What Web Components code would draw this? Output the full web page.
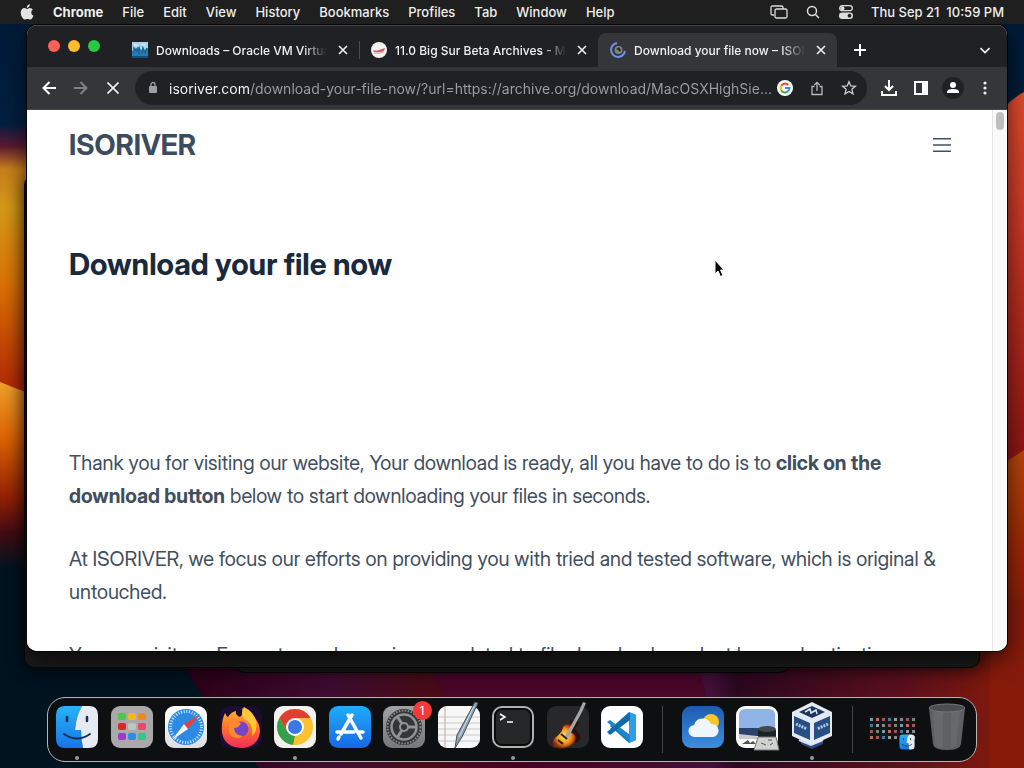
<!DOCTYPE html>
<html lang="en">
<head>
<meta charset="utf-8">
<title>Download your file now – ISORIVER</title>
<style>
  html, body { height: 100%; }
  body { margin: 0; overflow: hidden; background: #001420; font-family: Inter, "Liberation Sans", sans-serif; }
</style>
</head>
<body>
<mac-desktop>
  <menu-bar slot="menu"></menu-bar>
  <chrome-window slot="window">
    <browser-tab slot="tabs" label="Downloads – Oracle VM VirtualBox">
      <svg slot="icon" width="16" height="16" viewBox="0 0 16 16"><rect width="16" height="16" fill="#2a7db4"/><path d="M0 0h16v6L11 9 6 5 0 9z" fill="#a9d6ee"/><path d="M2 12V6l3 3 2-3v7M10 12l1-6 2 5 2-5" fill="none" stroke="#1b6498" stroke-width="1.500"/><path d="M2 3h4M10 3h3" stroke="#e6f6ff"/><path d="M0 14h16v2H0z" fill="#12507f"/></svg>
    </browser-tab>
    <browser-tab slot="tabs" label="11.0 Big Sur Beta Archives - Mr. Macintosh">
      <svg slot="icon" width="16" height="16" viewBox="0 0 16 16"><circle cx="8" cy="8" r="8" fill="#f5f1ef"/><path d="M2 8q3 1 6 0t6-2l-1 3q-4 2-10 1z" fill="#cf6068"/><path d="M3 11q5 1 10-1" fill="none" stroke="#b9b1ad"/></svg>
    </browser-tab>
    <browser-tab slot="tabs" active label="Download your file now – ISORIVER">
      <svg slot="icon" width="16" height="16" viewBox="0 0 16 16"><circle cx="8.500" cy="8" r="4" fill="#7d8681"/><path d="M6 7l3-2 2 3-1 2-2-2z" fill="#262c2c"/><path d="M7 1a7 7 0 1 0 8 8" fill="none" stroke="#6d92ec" stroke-width="2"/></svg>
    </browser-tab>
    <iso-page></iso-page>
  </chrome-window>
  <mac-dock slot="dock"></mac-dock>
</mac-desktop>

<script>
class MacDesktop extends HTMLElement {
  constructor() {
    super();
    this.attachShadow({ mode: "open" });
    this.shadowRoot.innerHTML = `
      <style>
        :host { display: block; position: relative; height: 100vh; overflow: hidden; }
        .wall { position: absolute; inset: 0; width: 100%; height: 100%; }
        .back {
          position: absolute;
          box-sizing: border-box;
          background: #1b1b1b;
          border: 1px solid #050505;
          border-radius: 10px;
        }
        .one { inset: 175px 44px 100px 24px; box-shadow: 0 4px 16px #0008; }
        .two { inset: 300px 234px 95px 235px; }
        .win { position: absolute; inset: 25px 17px 117px 27px; display: flex; }
        .menu { position: relative; }
        .dock { position: absolute; inset: auto 0 6px 0; display: flex; justify-content: center; }
        .cursor { position: absolute; left: 713px; top: 259px; }
      </style>
      <svg class="wall" viewBox="0 0 1024 768" preserveAspectRatio="none" aria-hidden="true">
        <defs>
          <linearGradient id="l" x1="0" y1="0" x2="0" y2="1">
            <stop offset="0" stop-color="#001a36"/><stop offset=".16" stop-color="#001f40"/>
            <stop offset=".19" stop-color="#5b1830"/><stop offset=".22" stop-color="#c8801c"/>
            <stop offset=".27" stop-color="#d59a18"/><stop offset=".37" stop-color="#da7206"/>
            <stop offset=".5" stop-color="#b52c06"/>
          </linearGradient>
          <linearGradient id="m" x1="0" y1="0" x2="0" y2="1">
            <stop offset="0" stop-color="#f0a22c"/><stop offset=".3" stop-color="#dc6404"/>
            <stop offset=".62" stop-color="#922006"/><stop offset=".8" stop-color="#430c14"/>
            <stop offset="1" stop-color="#001420"/>
          </linearGradient>
          <linearGradient id="r" x1="0" y1="0" x2="0" y2="1">
            <stop offset="0" stop-color="#e04c2c"/><stop offset=".35" stop-color="#cc3826"/>
            <stop offset="1" stop-color="#8c1414"/>
          </linearGradient>
          <linearGradient id="s" x1="0" y1="0" x2="0" y2="1">
            <stop offset="0" stop-color="#b8480a"/><stop offset=".5" stop-color="#9c2606"/>
            <stop offset="1" stop-color="#76180e"/>
          </linearGradient>
          <linearGradient id="b">
            <stop offset="0" stop-color="#2c0018"/><stop offset=".18" stop-color="#3e0c30"/>
            <stop offset=".29" stop-color="#480c18"/><stop offset=".4" stop-color="#480020"/>
            <stop offset=".63" stop-color="#421038"/><stop offset=".66" stop-color="#2c0820"/>
            <stop offset=".86" stop-color="#5c101c"/><stop offset="1" stop-color="#8a1c08"/>
          </linearGradient>
        </defs>
        <rect width="1024" height="768" fill="#001420"/>
        <rect width="512" height="768" fill="url(#l)"/>
        <path d="M0 382L40 398V570H0z" fill="url(#m)"/>
        <path d="M0 568h40v60h472v140H0z" fill="#001420"/>
        <rect x="512" width="512" height="110" fill="#001b38"/>
        <path d="M180 600H1024V768H260Q215 720 180 660z" fill="url(#b)"/>
        <path d="M420 660q20 22 26 38h260q-2-20-14-38z" fill="#480728"/>
        <path d="M990 130q14-28 34-38v370h-34z" fill="url(#r)"/>
        <path d="M990 472l34-22v200h-34z" fill="url(#s)"/>
        <path d="M990 600h34v168h-34z" fill="#861b0a"/>
      </svg>
      <div class="back two"></div>
      <div class="back one"></div>
      <div class="win"><slot name="window"></slot></div>
      <div class="menu"><slot name="menu"></slot></div>
      <div class="dock"><slot name="dock"></slot></div>
      <svg class="cursor" width="14" height="20" viewBox="0 0 14 20" aria-hidden="true"><path d="M2 1v14l3-3 2.500 5.500 2.500-1-2.500-5.500H11z" fill="#000" stroke="#fff"/></svg>
    `;
  }
}

class MenuBar extends HTMLElement {
  constructor() {
    super();
    this.attachShadow({ mode: "open" });
    const menus = ["File", "Edit", "View", "History", "Bookmarks", "Profiles", "Tab", "Window", "Help"];
    this.shadowRoot.innerHTML = `
      <style>
        :host {
          display: flex;
          align-items: center;
          box-sizing: border-box;
          height: 24px;
          padding: 0 20px;
          background: #1f1f1f;
          color: #eee;
          font-size: 13px;
          font-weight: 500;
        }
        nav, .status { display: flex; align-items: center; }
        nav { gap: 19px; }
        .status { margin-left: auto; gap: 17px; }
        button {
          display: flex;
          padding: 0;
          border: 0;
          background: none;
          color: inherit;
          font: inherit;
          white-space: pre;
        }
        .app { font-weight: 700; }
      </style>
      <nav>
        <button aria-label="Apple"><svg width="14" height="16" viewBox="0 0 14 16" fill="#e4e4e4"><path d="M9.800 0q.2 2-1 3.100Q7.900 4 6.800 3.900 6.700 2.300 7.700 1.200 8.600.2 9.800 0zM7 4.900c.8 0 1.500-.8 2.900-.8q2 0 3 1.500-1.700 1-1.700 2.900 0 2.300 2.200 3.200-.5 1.500-1.500 2.800-.8 1-1.700 1c-1 0-1.400-.6-2.700-.6s-1.800.6-2.700.6q-1 0-2-1.300Q.7 11.600.7 8.800q0-2.200 1.200-3.500 1-1.200 2.500-1.200c1.200 0 1.900.8 2.600.8z"/></svg></button>
        <button class="app">Chrome</button>
        ${menus.map(m => `<button>${m}</button>`).join("")}
      </nav>
      <div class="status">
        <button aria-label="Stage Manager"><svg width="18" height="14" viewBox="0 0 18 14" fill="none" stroke="#ddd" stroke-width="1.300"><path d="M4 10H2.500Q1 10 1 8.500v-6Q1 1 2.500 1h9Q13 1 13 2.500V4"/><rect x="5" y="4" width="12" height="9" rx="1.500"/></svg></button>
        <button aria-label="Spotlight"><svg width="16" height="14" viewBox="0 0 16 14" fill="none" stroke="#ddd" stroke-width="1.500"><circle cx="7" cy="6" r="4.500"/><path d="M10.500 9.500L14 13"/></svg></button>
        <button aria-label="Control Center"><svg width="16" height="14" viewBox="0 0 16 14"><rect x="1.700" y=".7" width="12.600" height="5" rx="2.500" fill="none" stroke="#ddd" stroke-width="1.300"/><circle cx="4.500" cy="3.200" r="2" fill="#ddd"/><rect x="1" y="7.500" width="14" height="6.500" rx="3.200" fill="#ddd"/><circle cx="11.500" cy="10.700" r="1.900" fill="#1f1f1f"/></svg></button>
        <button>Thu Sep 21  10:59 PM</button>
      </div>
    `;
  }
}

class BrowserTab extends HTMLElement {
  constructor() {
    super();
    this.attachShadow({ mode: "open" });
    this.shadowRoot.innerHTML = `
      <style>
        :host {
          display: flex;
          flex: 0 1 239px;
          min-width: 0;
          align-items: center;
          gap: 8px;
          box-sizing: border-box;
          height: 34px;
          padding: 0 8px 0 12px;
          border-radius: 8px 8px 0 0;
          color: #f1f1f2;
          font-size: 12px;
          font-weight: 500;
        }
        :host([active]) { background: #35363a; }
        :host(:first-of-type) { box-shadow: 1px 0 #4a4b4f; clip-path: inset(8px -1px 8px 0); }
        .label {
          flex: 1;
          padding: 0;
          border: 0;
          background: none;
          color: inherit;
          font: inherit;
          text-align: left;
          white-space: nowrap;
          overflow: hidden;
          -webkit-mask-image: linear-gradient(90deg, #000 calc(100% - 24px), transparent);
          mask-image: linear-gradient(90deg, #000 calc(100% - 24px), transparent);
        }
        .close { display: flex; padding: 3px; border: 0; background: none; }
      </style>
      <slot name="icon"></slot>
      <button class="label" role="tab"></button>
      <button class="close" aria-label="Close tab"><svg width="10" height="10" viewBox="0 0 10 10" stroke="#f1f1f2" stroke-width="1.600"><path d="M1 1l8 8M9 1L1 9"/></svg></button>
    `;
  }

  connectedCallback() {
    this.shadowRoot.querySelector(".label").textContent = this.getAttribute("label");
  }
}

class ChromeWindow extends HTMLElement {
  constructor() {
    super();
    this.attachShadow({ mode: "open" });
    this.shadowRoot.innerHTML = `
      <style>
        :host {
          display: flex;
          flex: 1;
          flex-direction: column;
          min-width: 0;
          overflow: hidden;
          border-radius: 10px;
          background: #fff;
          box-shadow: 0 0 0 1px #050505, 0 8px 24px #000a;
        }
        button {
          display: flex;
          flex: none;
          align-items: center;
          justify-content: center;
          padding: 0;
          border: 0;
          background: none;
        }
        .strip {
          display: flex;
          align-items: flex-end;
          flex: none;
          height: 42px;
          background: #202124;
          box-shadow: inset 0 1px #46474a;
        }
        .lights { display: flex; gap: 8px; padding: 0 20px 15px 21px; }
        .lights button { width: 12px; height: 12px; border-radius: 50%; }
        .tabs { display: flex; flex: 0 1 718px; min-width: 0; }
        .strip > button { width: 44px; height: 34px; }
        .chev { margin-left: auto; }
        .bar {
          display: flex;
          align-items: center;
          flex: none;
          height: 43px;
          box-sizing: border-box;
          padding: 0 6px;
          background: #35363a;
          border-bottom: 1px solid #46474b;
        }
        .bar > button { width: 32px; height: 34px; }
        .omni {
          display: flex;
          align-items: center;
          flex: 1;
          min-width: 0;
          height: 34px;
          margin: 0 6px;
          padding: 0 2px 0 12px;
          border-radius: 17px;
          background: #202124;
        }
        .omni button { width: 32px; height: 32px; }
        input {
          flex: 1;
          min-width: 0;
          margin: 0 -8px 0 10px;
          padding: 0;
          border: 0;
          outline: 0;
          font: 14px Inter, "Liberation Sans", sans-serif;
          color: transparent;
          background: linear-gradient(90deg, #fff 81px, #9aa0a6 81px);
          -webkit-background-clip: text;
          background-clip: text;
        }
        .me { width: 22px; height: 22px; border-radius: 50%; background: #202124; }
        .view { display: flex; flex: 1; min-height: 0; }
        .scroll {
          flex: none;
          width: 8px;
          padding: 2px 3px;
          border-left: 1px solid #e6e6e6;
          background: #fafafa;
        }
        .thumb { height: 18px; border-radius: 4px; background: #bfbfbf; }
        ::slotted(iso-page) { flex: 1; min-width: 0; }
      </style>
      <div class="strip">
        <div class="lights">
          <button aria-label="Close" style="background:#ff5f57"></button>
          <button aria-label="Minimize" style="background:#febc2e"></button>
          <button aria-label="Zoom" style="background:#28c840"></button>
        </div>
        <div class="tabs" role="tablist"><slot name="tabs"></slot></div>
        <button aria-label="New tab"><svg width="12" height="12" viewBox="0 0 12 12" stroke="#fff" stroke-width="2"><path d="M6 0v12M0 6h12"/></svg></button>
        <button class="chev" aria-label="Search tabs"><svg width="10" height="7" viewBox="0 0 10 7" fill="none" stroke="#eee" stroke-width="1.600"><path d="M.5 1L5 5.500 9.500 1"/></svg></button>
      </div>
      <div class="bar">
        <button aria-label="Back"><svg width="14" height="14" viewBox="0 0 14 14" fill="none" stroke="#fff" stroke-width="2"><path d="M14 7H1.500M7.500 1l-6 6 6 6"/></svg></button>
        <button aria-label="Forward"><svg width="14" height="14" viewBox="0 0 14 14" fill="none" stroke="#808185" stroke-width="2"><path d="M0 7h12.500M6.500 1l6 6-6 6"/></svg></button>
        <button aria-label="Stop"><svg width="12" height="12" viewBox="0 0 12 12" stroke="#f1f1f1" stroke-width="1.700"><path d="M.5.5l11 11M11.500.5l-11 11"/></svg></button>
        <div class="omni">
          <svg width="12" height="14" viewBox="0 0 12 14"><rect x="2" y="5" width="8" height="7" rx="1" fill="#9aa0a6"/><path d="M4 5V3.500a2 2 0 0 1 4 0V5" fill="none" stroke="#9aa0a6" stroke-width="1.300"/></svg>
          <input aria-label="Address" value="isoriver.com/download-your-file-now/?url=https://archive.org/download/MacOSXHighSie...">
          <button aria-label="Google"><svg width="16" height="16" viewBox="0 0 16 16" fill="none" stroke-width="2"><circle cx="8" cy="8" r="8" fill="#fff"/><path d="M11.200 5A4.400 4.400 0 0 0 4.200 5.800" stroke="#ea4335"/><path d="M4.200 5.800a4.400 4.400 0 0 0 0 4.400" stroke="#fbbc05"/><path d="M4.200 10.200a4.400 4.400 0 0 0 6.800 1.100" stroke="#34a853"/><path d="M11 11.300A4.400 4.400 0 0 0 12.400 8H8" stroke="#4285f4"/></svg></button>
          <button aria-label="Share"><svg width="12" height="15" viewBox="0 0 12 15" fill="none" stroke="#b4b7bb" stroke-width="1.300"><path d="M3.500 5.500H1v8h10v-8H8.500M6 10V1.500M3.300 4L6 1.300 8.700 4"/></svg></button>
          <button aria-label="Bookmark"><svg width="16" height="16" viewBox="0 0 16 16" fill="none" stroke="#c8cbd0" stroke-width="1.300"><path d="M8 1.700l1.800 4.200 4.600.4-3.500 3 1.100 4.500L8 11.400l-4 2.400 1.100-4.500-3.500-3 4.600-.4z"/></svg></button>
        </div>
        <button aria-label="Downloads"><svg width="16" height="16" viewBox="0 0 16 16" fill="none" stroke="#fff" stroke-width="2"><path d="M8 0v10M4 6l4 4 4-4M1 11v4h14v-4"/></svg></button>
        <button aria-label="Side panel"><svg width="14" height="14" viewBox="0 0 14 14"><rect x="1" y="1" width="12" height="12" fill="none" stroke="#fff" stroke-width="2"/><path d="M8 1h5v12H8z" fill="#fff"/></svg></button>
        <button aria-label="Profile"><span class="me"><svg width="22" height="22" viewBox="0 0 22 22" fill="#fff"><circle cx="11" cy="8" r="3"/><path d="M5 16v-1q0-3 6-3t6 3v1z"/></svg></span></button>
        <button aria-label="Menu"><svg width="4" height="14" viewBox="0 0 4 14" fill="#eee"><circle cx="2" cy="2" r="1.600"/><circle cx="2" cy="7" r="1.600"/><circle cx="2" cy="12" r="1.600"/></svg></button>
      </div>
      <div class="view"><slot></slot><div class="scroll"><div class="thumb"></div></div></div>
    `;
  }
}

class IsoPage extends HTMLElement {
  constructor() {
    super();
    this.attachShadow({ mode: "open" });
    this.shadowRoot.innerHTML = `
      <style>
        :host {
          display: block;
          box-sizing: border-box;
          padding: 0 41px 0 42px;
          overflow: hidden;
          background: #fff;
          color: #414e5e;
          font-family: "Inter Display", Inter, "Liberation Sans", sans-serif;
          font-size: 20px;
          line-height: 33px;
        }
        header { display: flex; align-items: center; justify-content: space-between; height: 70px; }
        a { color: #3b4b60; font-size: 28px; font-weight: 700; text-decoration: none; }
        button { display: flex; padding: 0; border: 0; background: none; }
        h1 { margin: 64px 0 163px; color: #192a3d; font-size: 30px; font-weight: 700; line-height: 40px; }
        p { margin: 0 0 30px; }
      </style>
      <header>
        <a href="#">ISORIVER</a>
        <button aria-label="Open menu"><svg width="18" height="14" viewBox="0 0 18 14" fill="#3f5265"><path d="M0 0h18v1.600H0zM0 6.200h18v1.600H0zM0 12.400h18V14H0z"/></svg></button>
      </header>
      <main>
        <h1>Download your file now</h1>
        <p>Thank you for visiting our website, Your download is ready, all you have to do is to <strong>click on the download button</strong> below to start downloading your files in seconds.</p>
        <p>At ISORIVER, we focus our efforts on providing you with tried and tested software, which is original &amp; untouched.</p>
        <p>You can visit our Forum to read experiences related to file download, product key and activation</p>
      </main>
    `;
  }
}

class DockItem extends HTMLElement {
  constructor() {
    super();
    this.attachShadow({ mode: "open" });
    this.shadowRoot.innerHTML = `
      <style>
        :host { display: flex; flex: 1; min-width: 0; justify-content: center; position: relative; }
        button { display: flex; padding: 0; border: 0; background: none; }
        :host([running])::after {
          content: "";
          position: absolute;
          bottom: 1px;
          width: 4px;
          height: 4px;
          border-radius: 50%;
          background: #999;
        }
        .badge {
          position: absolute;
          top: 3px;
          right: 0;
          width: 19px;
          border-radius: 10px;
          background: #f43a38;
          color: #fff;
          font-size: 12px;
          line-height: 19px;
          text-align: center;
        }
        .badge:empty { display: none; }
      </style>
      <button><slot></slot></button>
      <span class="badge"></span>
    `;
  }

  connectedCallback() {
    this.shadowRoot.querySelector("button").setAttribute("aria-label", this.getAttribute("name"));
    this.shadowRoot.querySelector(".badge").textContent = this.getAttribute("badge") || "";
  }
}

// Every icon is drawn on a 50 unit square, with the 42 unit tile inset by 4.
const tile = fill => `<rect x="4" y="4" width="42" height="42" rx="9" fill="${fill}"/>`;

const pads = ["#4cc84a", "#f5b920", "#ee8a1c", "#d8282c", "#c2c2c2", "#f0466c", "#9a3cc8", "#2a8ee8", "#2cc88c"]
  .map((c, i) => `<rect x="${11 + i % 3 * 10}" y="${11 + Math.floor(i / 3) * 10}" width="8" height="7" rx="2" fill="${c}"/>`).join("");

const minis = Array.from({ length: 32 }, (_, i) => {
  const c = ["#79a", "#47a", "#955", "#c65", "#999", "#786", "#a55", "#888"][(i * 3 + (i >> 3)) % 8];
  return `<rect x="${3 + i % 8 * 6}" y="${16 + (i >> 3) * 6}" width="3" height="3" fill="${c}"/>`;
}).join("");

const finder = `
  <path d="M13 4h17q-6 10-7 24h6q0 9 2 18H13q-9 0-9-9V13q0-9 9-9z" fill="url(#fb)"/>
  <path d="M30 4h7q9 0 9 9v24q0 9-9 9h-6q-2-9-2-18h-6Q24 14 30 4z" fill="#e6eaf2"/>
  <path d="M15 15v4M35 15v4" stroke="#16324c" stroke-width="2.500" stroke-linecap="round"/>
  <path d="M12 32q13 9 26 0" fill="none" stroke="#16324c" stroke-width="2" stroke-linecap="round"/>`;

const icons = [
  { name: "Finder", running: true, art: finder },
  { name: "Launchpad", art: tile("#aaa8a9") + pads },
  { name: "Safari", art: tile("url(#wh)") + `
    <circle cx="25" cy="25" r="18" fill="#2c8ae4"/>
    <circle cx="25" cy="25" r="15.500" fill="none" stroke="#d6ecff" stroke-width="3" stroke-dasharray="1 1.700"/>
    <path d="M39 12L23 22l4 5z" fill="#e8403a"/><path d="M11 38l12-16 4 5z" fill="#f4f6fa"/>` },
  { name: "Firefox", art: tile("#1c0c34") + `
    <path d="M9 11q1 3 3 4 3-5 8-6-1 4 4 6 4-3 2-9 5 3 7 8l3-1q8 7 8 16-1 15-17 17Q9 46 6 31 5 19 9 11z" fill="url(#ff)"/>
    <path d="M28 5q10 5 12 14 2 10-4 15 2-13-8-17-4-6 0-12z" fill="#ffc53c"/>
    <circle cx="25" cy="27" r="7.500" fill="#7445c4"/><path d="M13 21q7-3 12 0-2 5-7 5 0 7 9 8-8 5-14-3z" fill="#ff8a2c"/>` },
  { name: "Chrome", running: true, art: tile("#f3f1ee") + `
    <circle cx="25" cy="25" r="18" fill="#fbc12e"/>
    <path d="M9.400 16A18 18 0 0 1 40.600 16H25L17.200 29.500z" fill="#df3f33"/>
    <path d="M9.400 16l7.800 13.500 7.800 4.500-1 9A18 18 0 0 1 9.400 16z" fill="#34a04c"/>
    <path d="M25 34l7.800-4.500L25 43l-2-.1z" fill="#fbc12e"/>
    <circle cx="25" cy="25" r="9" fill="#fff"/><circle cx="25" cy="25" r="7" fill="#3a78e4"/>` },
  { name: "App Store", art: tile("url(#as)") + `
    <path d="M27 13L16 32M23 13l13 23M12 30h17M34 30h4M14 35l-1 2" fill="none" stroke="#fff" stroke-width="3.500" stroke-linecap="round"/>` },
  { name: "System Settings", badge: "1", art: tile("url(#gr)") + `
    <circle cx="25" cy="25" r="18" fill="#343536"/><circle cx="25" cy="25" r="16.500" fill="none" stroke="#8b8c8e" stroke-width="2" stroke-dasharray="1.500 1.500"/>
    <circle cx="25" cy="25" r="12.500" fill="none" stroke="#929395" stroke-width="2.500"/><path d="M25 25h12M25 25l-7-11M25 25l-7 11" stroke="#929395" stroke-width="3"/><circle cx="25" cy="25" r="4" fill="#343536" stroke="#929395" stroke-width="2"/>` },
  { name: "TextEdit", art: tile("#f7f7f7") + `
    <path d="M4 15h42M4 21h42M4 27h42M4 33h42M4 39h42" stroke="#c9c9cb"/><path d="M11 4v42" stroke="#c9a9a0"/>
    <path d="M41 0l3 1-16 34-7 11 2-13z" fill="#8ba3b4" stroke="#45525c"/><path d="M40 4L25 35" stroke="#d6e2e8"/>` },
  { name: "Terminal", running: true, art: `
    <rect x="5" y="5" width="40" height="40" rx="9" fill="#0a0a0a" stroke="#b0b0ae" stroke-width="2"/><rect x="8" y="8" width="34" height="34" rx="6" fill="#262728"/>
    <path d="M12 12l5 3-5 3M19 20h6" fill="none" stroke="#fff" stroke-width="1.500"/>` },
  { name: "GarageBand", art: tile("#28282a") + `
    <path d="M27 19q9-3 9 2l-4 6 5 6q2 8-6 7z" fill="#2e100a"/>
    <path d="M20 24q6-4 9 0l-1 6q8 4 3 11-8 8-20 4-4-7 4-12 4-3 5-9z" fill="url(#gb)" stroke="#5a2208"/>
    <path d="M22 34L36 9l4-9 3 1-4 9-14 26z" fill="#a5a5a7"/><path d="M18 32l6 5M15 38l5 4" stroke="#28201c" stroke-width="2"/>` },
  { name: "Visual Studio Code", art: tile("#fff") + `
    <path d="M32 10l7 3v25l-7 3-19-17 3-3 17 12V17L16 30l-3-3z" fill="#1679bd"/><path d="M32 10l7 3v25l-7 3z" fill="#2a9fe6"/><path d="M10 20l3-2 20 15v6z" fill="#1c88cc"/><path d="M10 30l3 3 20-15v-7z" fill="#116ba8"/>` },
  null,
  { name: "Weather", art: tile("url(#we)") + `
    <circle cx="33" cy="20" r="8" fill="#fac42c"/><path d="M17 35a6 6 0 0 1-1-12 9 9 0 0 1 17-1 6.500 6.500 0 0 1 2 13z" fill="#f0f5fc"/>` },
  { name: "Preview", art: tile("#fafafa") + `
    <path d="M7 13q0-6 6-6h24q6 0 6 6v13H7z" fill="#91b4e6"/><path d="M7 26h36v8H7z" fill="#2b416e"/><path d="M7 32l18 2v3H7z" fill="#c5cbd0"/><path d="M10 42l6-4 2 3 3-2 3 3z" fill="#4e5446"/>
    <path d="M26 28h18v8H26z" fill="#1b2124"/><path d="M26 35h18l3 13H22z" fill="#d0d2cf" stroke="#777"/><ellipse cx="35" cy="27" rx="9" ry="3" fill="#40494b"/><path d="M29 41l5 2M36 38h4M38 43l3-2" stroke="#555"/>` },
  { name: "VirtualBox", running: true, art: `
    <path d="M14 36h22v6l-11 5-11-5z" fill="#2c4886"/><path d="M12 38l12 5 12-5" fill="none" stroke="#d4def0" stroke-width="2"/>
    <path d="M5 10L25 0l20 10v24L25 43 5 34z" fill="#e4eaf3"/><path d="M12 10l13-6 13 6-13 6z" fill="#1c355e"/><path d="M7 14l16 7v17L7 31zM43 14l-16 7v17l16-7z" fill="#284f85"/>
    <path d="M18 10l5-3 1 4 5-3 1 4" fill="none" stroke="#dce6f2" stroke-width="1.500"/><path d="M9 22l11 5M41 22l-11 5" stroke="#afc6df" stroke-width="3" stroke-dasharray="2 1"/>` },
  null,
  { name: "Minimized window", art: `<path d="M2 14h47v24H2z" fill="#151617"/>${minis}<g transform="translate(31 31) scale(.36)">${finder}</g>` },
  { name: "Trash", art: `
    <path d="M7 6h36l-4 36q-1 6-14 6t-14-6z" fill="#5e6163"/><path d="M11 10h10v36q-7-1-8-4z" fill="#676a6c"/><path d="M29 10h9l-4 34-5 2z" fill="#66696b"/><ellipse cx="25" cy="6" rx="18" ry="4" fill="#4b4e50" stroke="#75787a"/>` }
];

const gradients = `
  <defs>
    <linearGradient id="fb" x2="0" y2="1"><stop stop-color="#28b4f8"/><stop offset="1" stop-color="#1674e8"/></linearGradient>
    <linearGradient id="wh" x2="0" y2="1"><stop stop-color="#fff"/><stop offset="1" stop-color="#dedede"/></linearGradient>
    <linearGradient id="ff" x2="0" y2="1"><stop stop-color="#ffb32e"/><stop offset=".5" stop-color="#ff702c"/><stop offset="1" stop-color="#f22c5c"/></linearGradient>
    <linearGradient id="as" x2="0" y2="1"><stop stop-color="#20acf8"/><stop offset="1" stop-color="#1768e8"/></linearGradient>
    <linearGradient id="gr" x2="0" y2="1"><stop stop-color="#a0a1a2"/><stop offset="1" stop-color="#77787a"/></linearGradient>
    <radialGradient id="gb"><stop stop-color="#ffe45c"/><stop offset=".6" stop-color="#f29422"/><stop offset="1" stop-color="#8c2c0c"/></radialGradient>
    <linearGradient id="we" x2="0" y2="1"><stop stop-color="#1c5cb0"/><stop offset="1" stop-color="#3c8ee0"/></linearGradient>
  </defs>`;

class MacDock extends HTMLElement {
  constructor() {
    super();
    this.attachShadow({ mode: "open" });
    this.shadowRoot.innerHTML = `
      <style>
        :host {
          display: flex;
          flex: 0 1 930px;
          box-sizing: border-box;
          height: 65px;
          padding: 0 2px;
          border: 1px solid #b9b4b2;
          border-radius: 18px;
          background: #0d0f10;
        }
        dock-item { padding-top: 4px; }
        .sep { flex: none; width: 26px; display: flex; justify-content: center; padding: 8px 0; }
        .sep::before { content: ""; width: 1px; background: #444; }
      </style>
      ${icons.map(icon => icon ? `
        <dock-item name="${icon.name}" ${icon.running ? "running" : ""} ${icon.badge ? `badge="${icon.badge}"` : ""}>
          <svg width="50" height="50" viewBox="0 0 50 50">${gradients}${icon.art}</svg>
        </dock-item>` : `<div class="sep"></div>`).join("")}
    `;
  }
}

customElements.define("mac-desktop", MacDesktop);
customElements.define("menu-bar", MenuBar);
customElements.define("browser-tab", BrowserTab);
customElements.define("chrome-window", ChromeWindow);
customElements.define("iso-page", IsoPage);
customElements.define("dock-item", DockItem);
customElements.define("mac-dock", MacDock);
</script>
</body>
</html>
